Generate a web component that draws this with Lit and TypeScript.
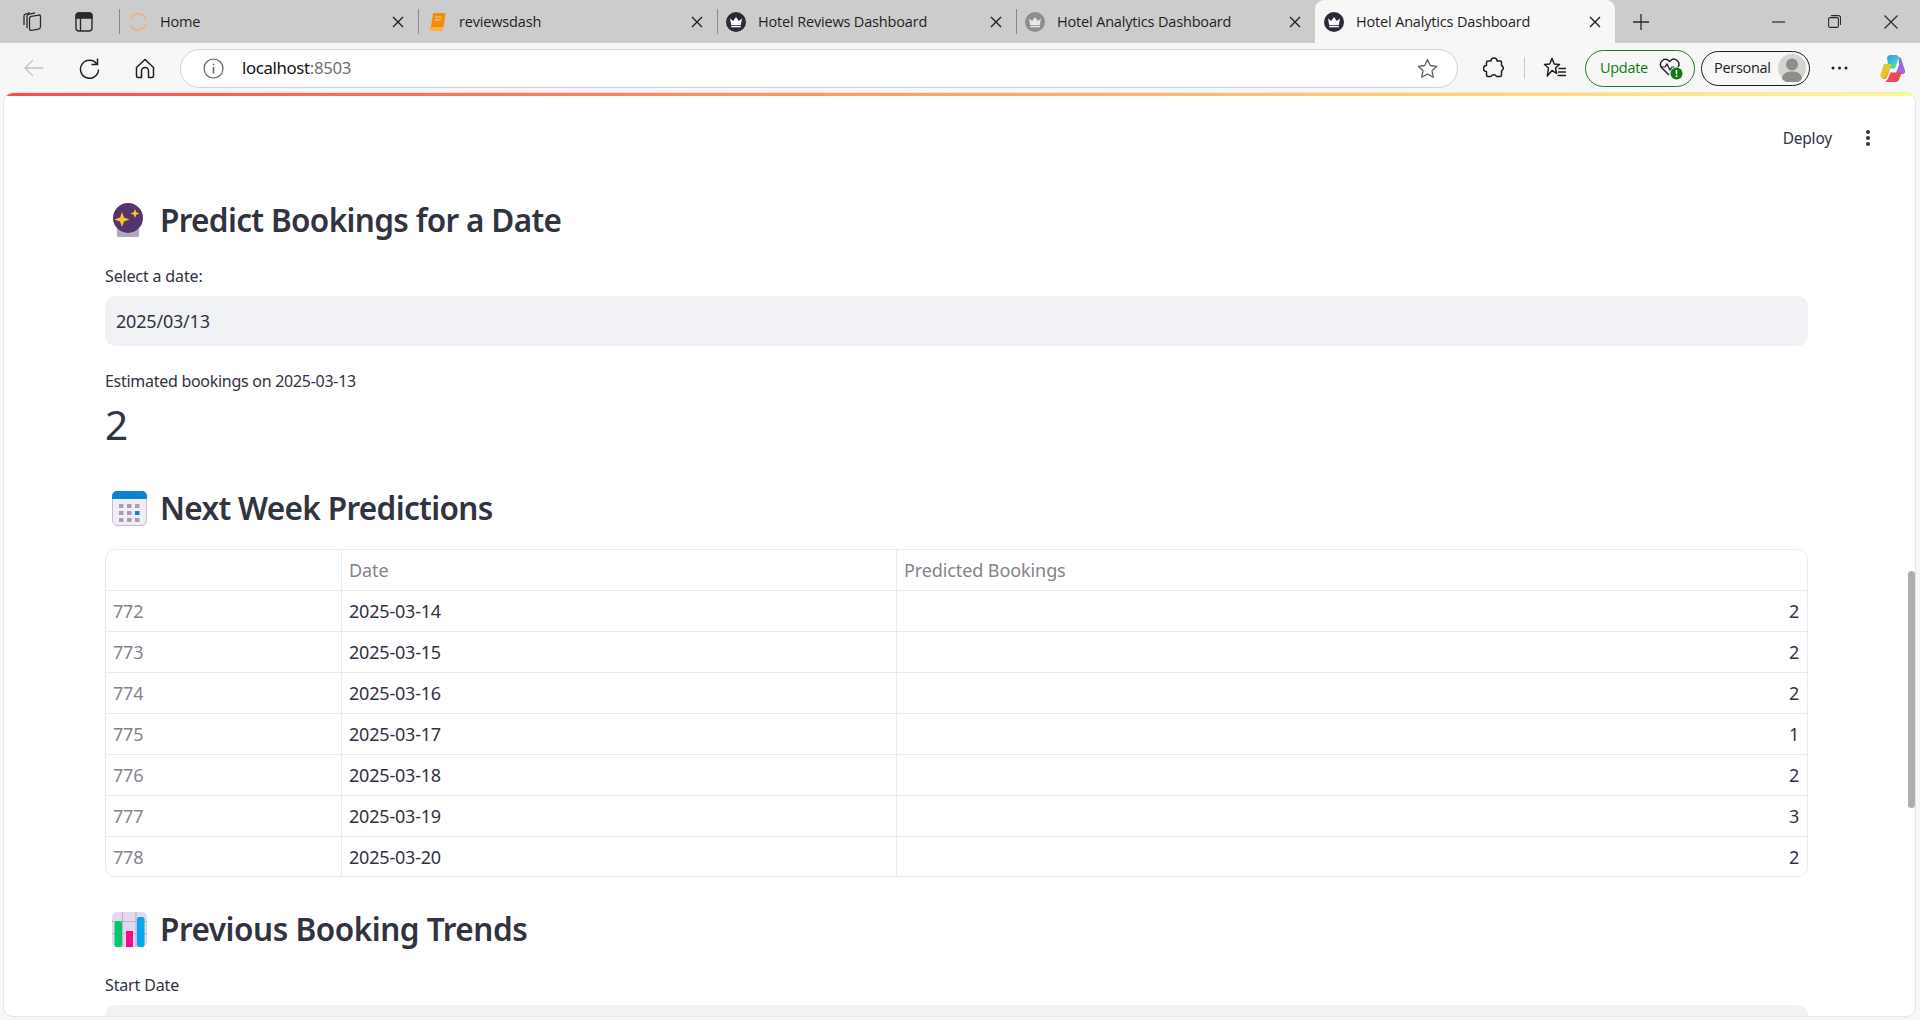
import { LitElement, html, css, svg } from "lit";
import { customElement } from "lit/decorators.js";

const crown = (bg: string, fg: string) => html`<svg class="fav" viewBox="0 0 20 20"><circle cx="10" cy="10" r="10" fill="${bg}"/><path d="M4 6.600 7.200 9 10 5l2.800 4L16 6.600 14.800 13H5.200z" fill="${fg}"/><rect x="5.200" y="13.800" width="9.600" height="1.500" fill="${fg}"/></svg>`;
const x = html`<svg class="close" viewBox="0 0 12 12"><path d="M1 1l10 10M11 1 1 11" stroke="#1c1c1c" stroke-width="1.300" fill="none"/></svg>`;

const tabs = [
  { title: "Home", icon: html`<svg class="fav" viewBox="0 0 20 20" fill="none" stroke="#e8b48e" stroke-width="2"><path d="M2 7a9 9 0 0 1 16 0"/><path d="M2 13a9 9 0 0 0 16 0"/></svg>` },
  { title: "reviewsdash", icon: html`<svg class="fav" viewBox="0 0 20 20"><path d="M6 1h11.500a1 1 0 0 1 1 1.200L16.500 15H4z" fill="#f58a0b"/><path d="M4 15h12l-.5 4H4.500C2 19 2 15 4 15z" fill="#fbb040"/><path d="M8 5h6.500M7.500 8h6.500" stroke="#fff" stroke-opacity=".55" stroke-width="1"/></svg>` },
  { title: "Hotel Reviews Dashboard", icon: crown("#2a2a38", "#fff") },
  { title: "Hotel Analytics Dashboard", icon: crown("#8e8e92", "#e9e9ea") },
  { title: "Hotel Analytics Dashboard", icon: crown("#2a2a38", "#fff"), active: true },
];
const rows: [number, string, number][] = [
  [772, "2025-03-14", 2], [773, "2025-03-15", 2], [774, "2025-03-16", 2], [775, "2025-03-17", 1],
  [776, "2025-03-18", 2], [777, "2025-03-19", 3], [778, "2025-03-20", 2],
];

@customElement("app-root")
export class AppRoot extends LitElement {
  static styles = css`
    :host { display: block; width: 1920px; height: 1020px; overflow: hidden; background: #f7f7f7; font-family: "Noto Sans", sans-serif; color: #31333f; }
    svg { display: block; flex: none; }

    .tabbar { height: 43px; background: #cccccc; display: flex; align-items: stretch; font-family: "Open Sans", sans-serif; font-size: 14.500px; color: #1f1f1f; }
    .tabbar-lead { width: 119px; flex: none; display: flex; align-items: center; padding-left: 22px; gap: 33px; box-sizing: border-box; }
    .tab { width: 299px; flex: none; box-sizing: border-box; display: flex; align-items: center; position: relative; padding: 0 14px 0 9px; }
    .tab::before { content: ""; position: absolute; left: 0; top: 9px; bottom: 9px; width: 1px; background: #8a8a8a; }
    .tab.active { background: #f7f7f7; border-radius: 9px 9px 0 0; width: 300px; }
    .tab.active::before { display: none; }
    .fav { width: 20px; height: 20px; margin-right: 12px; }
    .tab-title { flex: 1; white-space: nowrap; letter-spacing: -0.17px; margin-top: -1px; }
    .close { width: 12px; height: 12px; }
    .tab-after { flex: none; display: flex; align-items: center; padding-left: 18px; }
    .win { flex: 1; display: flex; align-items: center; justify-content: flex-end; padding-right: 22px; gap: 43px; }

    .toolbar { height: 50px; display: flex; align-items: center; padding-left: 25px; box-sizing: border-box; font-family: "Open Sans", sans-serif; }
    .nav { display: flex; align-items: center; gap: 35px; margin-left: -1px; }
    .address { margin-left: 25px; width: 1278px; height: 39px; box-sizing: border-box; border: 1px solid #d2d2d2; border-radius: 20px; background: #fff; display: flex; align-items: center; padding: 0 19px 0 22px; }
    .url { flex: 1; margin-left: 18px; margin-top: -1px; font-size: 16.800px; letter-spacing: -0.35px; color: #111; font-family: "Noto Sans", sans-serif; }
    .url span { color: #6d7278; }
    .tools { margin-left: 25px; display: flex; align-items: center; }
    .vsep { width: 1px; height: 22px; background: #c9c9c9; margin: 0 18px 0 19px; }
    .update { margin-left: 18px; width: 110px; height: 37px; box-sizing: border-box; border: 1.500px solid #1a7f1a; border-radius: 19px; display: flex; align-items: center; padding-left: 14px; gap: 11px; color: #107c10; font-size: 14.500px; letter-spacing: -0.3px; }
    .update span, .personal span { margin-top: -1px; }
    .personal { margin-left: 6px; width: 109px; height: 35px; box-sizing: border-box; border: 1.500px solid #1c1c1c; border-radius: 18px; display: flex; align-items: center; justify-content: space-between; padding: 0 3px 0 12px; font-size: 14.500px; letter-spacing: -0.3px; color: #1c1c1c; }
    .avatar { width: 28px; height: 28px; }
    .more { margin-left: 21px; }
    .copilot { margin-left: 31px; }

    .page { position: relative; margin-left: 4px; width: 1911px; height: 923px; overflow: hidden; background: #fff; border-radius: 9px; box-shadow: 0 0 0 1px #e6e6e6; }
    .stripe { height: 3px; background: linear-gradient(90deg, #ff4b4b, #fffd80); }
    .deploy-row { height: 100px; display: flex; justify-content: flex-end; align-items: flex-start; padding: 30px 44px 0 0; box-sizing: border-box; gap: 33px; }
    .deploy { font-size: 15.500px; line-height: 24px; letter-spacing: -0.2px; }
    .kebab { margin-top: 3px; }
    .main { padding: 0 107px 0 101px; }

    .h { height: 48px; display: flex; align-items: center; }
    .h-icon { width: 55px; flex: none; display: flex; justify-content: flex-start; padding-left: 7px; box-sizing: border-box; }
    .h-text { font-size: 31.500px; font-weight: 600; letter-spacing: -0.66px; line-height: 48px; white-space: nowrap; }
    .h3 .h-text { letter-spacing: -0.46px; }
    .label { font-size: 16px; line-height: 24px; letter-spacing: -0.15px; }
    .input { margin-top: 8px; height: 50px; background: #f0f2f6; border-radius: 10px; padding-left: 11px; display: flex; align-items: center; font-size: 18px; letter-spacing: -0.2px; }
    .l1 { margin-top: 20px; }
    .l2 { margin-top: 23px; letter-spacing: -0.28px; }
    .metric { margin-top: 5px; height: 54px; line-height: 54px; font-size: 40.500px; }
    .h2 { margin-top: 32px; }
    .table { margin-top: 17px; border: 1px solid #eaeaec; border-radius: 10px; overflow: hidden; box-sizing: border-box; height: 328px; font-size: 18px; letter-spacing: -0.2px; }
    .tr { display: grid; grid-template-columns: 235px 555px 1fr; height: 41px; box-sizing: border-box; border-top: 1px solid #eaeaec; }
    .tr:first-child { border-top: 0; height: 40px; letter-spacing: -0.1px; }
    .td { display: flex; align-items: center; padding: 0 7px; border-left: 1px solid #eaeaec; }
    .td:first-child { border-left: 0; }
    .muted { color: #83848b; }
    .num { justify-content: flex-end; padding-right: 8px; }
    .h3 { margin-top: 28px; }
    .l3 { margin-top: 20px; }

    .thumb { position: absolute; right: 0; top: 478px; width: 7px; height: 237px; border-radius: 4px; background: #aeaeb2; }
  `;

  render() {
    const ln = 'none';
    return html`
      <div class="tabbar">
        <div class="tabbar-lead">
          <svg width="20" height="22" viewBox="0 0 20 22" fill="${ln}" stroke="#2a2a2a" stroke-width="1.300"><rect x="7.500" y="5" width="11" height="14" rx="2" transform="skewY(-10) translate(0 2)"/><path d="M5 17V5.500c0-1 .6-1.800 1.600-2.100l6.400-1.600"/><path d="M2 14V5c0-1 .6-1.600 1.500-1.900L8 1.800"/></svg>
          <svg width="18" height="20" viewBox="0 0 18 20" fill="${ln}" stroke="#2a2a2a" stroke-width="1.400"><rect x="1" y="1" width="16" height="18" rx="3"/><path d="M1 4a3 3 0 0 1 3-3h10a3 3 0 0 1 3 3v2H1z" fill="#2a2a2a"/><path d="M5.500 6v13"/></svg>
        </div>
        ${tabs.map(t => html`<div class="tab ${t.active ? "active" : ""}">${t.icon}<span class="tab-title">${t.title}</span>${x}</div>`)}
        <div class="tab-after"><svg width="16" height="16" viewBox="0 0 16 16"><path d="M8 0v16M0 8h16" stroke="#2a2a2a" stroke-width="1.300"/></svg></div>
        <div class="win">
          <svg width="13" height="2" viewBox="0 0 13 2"><path d="M0 1h13" stroke="#2a2a2a" stroke-width="1.200"/></svg>
          <svg width="13" height="13" viewBox="0 0 13 13" fill="none" stroke="#2a2a2a" stroke-width="1.100"><rect x=".6" y="2.600" width="9.800" height="9.800" rx="1.500"/><path d="M3 .6h7.500a2 2 0 0 1 2 2V10"/></svg>
          <svg width="14" height="14" viewBox="0 0 14 14"><path d="M.5.500l13 13M13.500.500l-13 13" stroke="#2a2a2a" stroke-width="1.200"/></svg>
        </div>
      </div>

      <div class="toolbar">
        <div class="nav">
          <svg width="20" height="18" viewBox="0 0 20 18" fill="none" stroke="#c4c4c4" stroke-width="1.400"><path d="M19.500 9H1M9 1 1 9l8 8"/></svg>
          <svg width="21" height="22" viewBox="0 0 21 22" fill="none" stroke="#1f1f1f" stroke-width="1.500"><path d="M17.800 7A9 9 0 1 0 19.500 12.500"/><path d="M18.500 1.500V7.500H12.500"/></svg>
          <svg width="20" height="21" viewBox="0 0 20 21" fill="none" stroke="#1f1f1f" stroke-width="1.500" stroke-linejoin="round"><path d="M1.500 9.500 10 1.500l8.500 8V18a1.500 1.500 0 0 1-1.500 1.500h-3.500V13a3.500 3.500 0 0 0-7 0v6.500H3A1.500 1.500 0 0 1 1.500 18z"/></svg>
        </div>
        <div class="address">
          <svg width="21" height="21" viewBox="0 0 21 21" fill="none" stroke="#666" stroke-width="1.200"><circle cx="10.500" cy="10.500" r="9.500"/><path d="M10.500 9v6.500" stroke-width="1.500"/><circle cx="10.500" cy="6.300" r=".9" fill="#666" stroke="none"/></svg>
          <div class="url">localhost<span>:8503</span></div>
          <svg width="21" height="21" viewBox="0 0 21 21" fill="none" stroke="#5f5f5f" stroke-width="1.300" stroke-linejoin="round"><path d="M10.500 1.500 13.300 7.500l6.500.8-4.800 4.500 1.300 6.500-5.800-3.300-5.800 3.300L6 12.800 1.200 8.300l6.500-.8z"/></svg>
        </div>
        <div class="tools">
          <svg width="22" height="22" viewBox="0 0 22 22" fill="none" stroke="#1f1f1f" stroke-width="1.500" stroke-linejoin="round"><path d="M8 4a3 3 0 0 1 6 0h3.500a1 1 0 0 1 1 1v3.500a3 3 0 0 1 0 5.500v4a1.500 1.500 0 0 1-1.500 1.500h-3.500a3 3 0 0 0-5.500 0H5A1.500 1.500 0 0 1 3.500 18v-3.500a3 3 0 0 1 0-6V5.500A1.500 1.500 0 0 1 5 4z"/></svg>
          <div class="vsep"></div>
          <svg width="24" height="22" viewBox="0 0 24 22" fill="none" stroke="#1f1f1f" stroke-width="1.500" stroke-linejoin="round"><path d="M9 1.500 11.300 7l5.200.5-4 3.500 1.200 5.300L9 13.500 4.300 19l1.200-8-4-3.500L6.700 7z"/><path d="M15.500 11.500H23M15 15H23M14.500 18.500H23" stroke-width="1.300"/></svg>
          <div class="update">
            <span>Update</span>
            <svg width="24" height="24" viewBox="0 0 24 24" fill="none"><path d="M10 19 2.500 11.500a5 5 0 0 1 7-7l1 1 1-1a5 5 0 0 1 7.500 6.500" stroke="#1f1f1f" stroke-width="1.400"/><path d="M2 11h4l2-3 3 6 2-3h2" stroke="#1f1f1f" stroke-width="1.200"/><circle cx="17.500" cy="17.500" r="6" fill="#107c10"/><path d="M17.500 14v4.200M17.500 19.600v1.400" stroke="#fff" stroke-width="1.600"/></svg>
          </div>
          <div class="personal">
            <span>Personal</span>
            <svg class="avatar" viewBox="0 0 28 28"><circle cx="14" cy="14" r="14" fill="#d6d4d0"/><circle cx="14" cy="10.500" r="6" fill="#8f8e8a"/><path d="M4 25c0-5 4-7.500 10-7.500S24 20 24 25a14 14 0 0 1-20 0z" fill="#8f8e8a"/></svg>
          </div>
          <svg class="more" width="17" height="4" viewBox="0 0 17 4" fill="#1f1f1f"><circle cx="2" cy="2" r="1.500"/><circle cx="8.500" cy="2" r="1.500"/><circle cx="15" cy="2" r="1.500"/></svg>
          <svg class="copilot" width="27" height="29" viewBox="0 0 27 29">
            <defs>
              <linearGradient id="cpa" x1="0" y1="0" x2="1" y2="1"><stop offset="0" stop-color="#2b9cf0"/><stop offset=".6" stop-color="#3fd0c0"/><stop offset="1" stop-color="#8bd65a"/></linearGradient>
              <linearGradient id="cpb" x1="0" y1="0" x2="1" y2="1"><stop offset="0" stop-color="#a8d84a"/><stop offset=".5" stop-color="#f2c230"/><stop offset="1" stop-color="#f47a3a"/></linearGradient>
              <linearGradient id="cpc" x1="0" y1="0" x2="1" y2="1"><stop offset="0" stop-color="#5a7cf0"/><stop offset="1" stop-color="#c45ae0"/></linearGradient>
            </defs>
            <path d="M8 3.500C9 1.500 10.500 1 12 1h5c1.500 0 2.500 1 3 2.500l-4 11H9.500z" fill="url(#cpa)"/>
            <path d="M19.500 3c2 0 2.500 1.500 3.200 3.500l3.300 10c.5 2-.5 3.500-2.500 3.500h-7l3.500-9z" fill="url(#cpc)"/>
            <path d="M5 10h7.500L9 21l-1 2.500c-1 2-2 1.500-3 1.500-2.500 0-4-2.500-3.500-4.500z" fill="url(#cpb)"/>
            <path d="M8.500 28c-1 0-1.800-.3-2.300-.7 1.500-.5 2.300-1.300 3-3l2.300-5.800H24c-.5 0-1.500 .2-2 2l-1.500 4c-.8 2.500-2 3.500-4 3.500z" fill="#ee4a55"/>
          </svg>
        </div>
      </div>

      <div class="page">
        <div class="stripe"></div>
        <div class="deploy-row">
          <span class="deploy">Deploy</span>
          <svg class="kebab" width="6" height="18" viewBox="0 0 6 18" fill="#31333f"><circle cx="3" cy="3" r="2"/><circle cx="3" cy="9" r="2"/><circle cx="3" cy="15" r="2"/></svg>
        </div>
        <div class="main">
          <div class="h">
            <div class="h-icon"><svg width="32" height="35" viewBox="0 0 32 35"><rect x="5" y="25" width="22" height="9" rx="1.500" fill="#b3a8bb"/><circle cx="16" cy="15" r="15" fill="#55336b"/><path d="M10 9l2 5.500 5.500 2-5.500 2L10 24l-2-5.500-5.500-2 5.500-2z" fill="#f4c430"/><path d="M23 6l1.300 3.200 3.200 1.300-3.200 1.300L23 15l-1.300-3.200-3.200-1.300 3.200-1.300z" fill="#f4c430"/></svg></div>
            <div class="h-text">Predict Bookings for a Date</div>
          </div>
          <div class="label l1">Select a date:</div>
          <div class="input">2025/03/13</div>
          <div class="label l2">Estimated bookings on 2025-03-13</div>
          <div class="metric">2</div>
          <div class="h h2">
            <div class="h-icon"><svg width="35" height="35" viewBox="0 0 35 35"><rect x=".5" y=".5" width="34" height="34" rx="5" fill="#f2ecf7" stroke="#c5bdd0"/><path d="M0 8V5a5 5 0 0 1 5-5h25a5 5 0 0 1 5 5v3z" fill="#0a84d0"/>
              ${[0, 1, 2].map(r => [0, 1, 2].map(c => svg`<rect x="${7 + c * 8}" y="${13 + r * 7}" width="4.500" height="4" fill="${r === 1 && c === 2 ? "#0a84d0" : "#a79db3"}"/>`))}
            </svg></div>
            <div class="h-text">Next Week Predictions</div>
          </div>
          <div class="table">
            <div class="tr muted"><div class="td"></div><div class="td">Date</div><div class="td">Predicted Bookings</div></div>
            ${rows.map(r => html`<div class="tr"><div class="td muted">${r[0]}</div><div class="td">${r[1]}</div><div class="td num">${r[2]}</div></div>`)}
          </div>
          <div class="h h3">
            <div class="h-icon"><svg width="35" height="35" viewBox="0 0 35 35"><rect width="35" height="35" rx="5" fill="#e2d9ec"/><path d="M10.500 0v35M24 0v35M0 9.500h35M0 21.500h35" stroke="#bdb4c6" stroke-width="1.200"/><rect x="2.500" y="9" width="7.500" height="26" rx="2" fill="#00c96b"/><rect x="14" y="19" width="7" height="16" fill="#f4098f"/><rect x="25" y="5" width="7.500" height="30" rx="2" fill="#00a8f0"/></svg></div>
            <div class="h-text">Previous Booking Trends</div>
          </div>
          <div class="label l3">Start Date</div>
          <div class="input"></div>
        </div>
        <div class="thumb"></div>
      </div>
    `;
  }
}
